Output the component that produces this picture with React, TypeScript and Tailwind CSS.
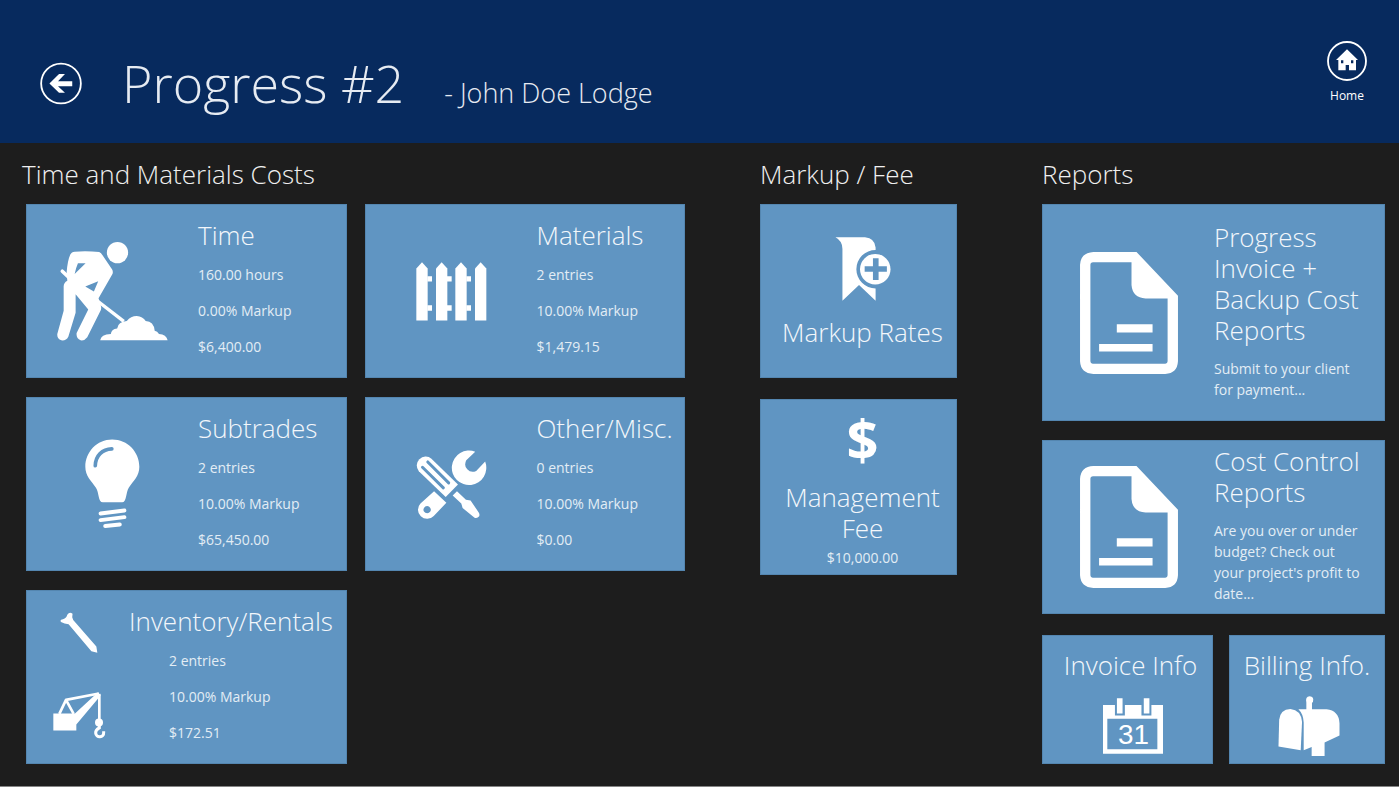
import type { ReactNode } from "react";

const TILE = "#6095c2";

function BackIcon() {
  return (
    <svg viewBox="0 0 126 130" className="h-[43px] w-[42px]" aria-hidden="true">
      <circle cx="63" cy="65" r="60" fill="none" stroke="#fff" strokeWidth="5.5" />
      <path d="M28 65 L57 36 H75 L54 58 H97 V73 H54 L75 93 H57Z" fill="#fff" />
    </svg>
  );
}

function HomeIcon() {
  return (
    <svg viewBox="0 0 120 120" className="h-10 w-10" aria-hidden="true">
      <circle cx="60" cy="60" r="57" fill="none" stroke="#fff" strokeWidth="5.5" />
      <path
        fillRule="evenodd"
        fill="#fff"
        d="M60 25 L93 57 H87 V88 H66 V72 H56 V88 H34 V57 H27Z M42 58 V67 H49 V58Z M72 58 V67 H79 V58Z"
      />
    </svg>
  );
}

function WorkerIcon() {
  return (
    <svg viewBox="111 275 334 298" className="h-[99px] w-[111px]" fill="#fff" aria-hidden="true">
      <circle cx="293" cy="307" r="32" />
      <path
        fillRule="evenodd"
        d="M164 304 Q200 301 238 305 Q244 308 248 315 L277 358 Q281 366 277 373 L236 444 L240 458 Q246 470 243 480 L202 562 Q194 573 182 571 Q168 565 170 549 L205 478 L167 432 V488 L145 560 Q138 573 124 571 Q110 566 112 551 L131 482 V412 Q130 398 142 392 L140 366 Q143 330 151 313 Q155 304 164 304Z M174 339 Q168 353 164 371 L197 339Z M196 409 L222 424 L235 393Z"
      />
      <path d="M127 363 L150 385" stroke="#fff" strokeWidth="11" strokeLinecap="round" />
      <path d="M231 451 L312 514" stroke="#fff" strokeWidth="10" />
      <path d="M241 571 Q243 553 273 552 Q274 537 292 535 Q295 515 321 513 Q333 498 351 498 Q369 499 378 513 Q402 514 405 542 Q413 543 418 552 Q440 553 444 571Z" />
    </svg>
  );
}

function FenceIcon() {
  const pickets = [169, 228, 286, 345];
  return (
    <svg viewBox="168 186 213 176" className="h-[59px] w-[71px]" fill="#fff" aria-hidden="true">
      {pickets.map((x, i) => (
        <g key={x}>
          <path d={`M${x} 361 V205 L${x + 17} 186 L${x + 34} 205 V361Z`} />
          {i < 3 && <path d={`M${x + 33} 228 h14 v16 h-14Z M${x + 33} 315 h14 v17 h-14Z`} />}
        </g>
      ))}
    </svg>
  );
}

function BulbIcon() {
  return (
    <svg viewBox="196 147 166 270" className="h-[90px] w-[55px]" fill="none" strokeLinecap="round" aria-hidden="true">
      <path
        fill="#fff"
        d="M278 148 C325 148 360 186 360 230 C360 258 342 273 328 293 C319 307 322 337 308 337 H250 C235 337 239 307 229 293 C215 273 197 258 197 230 C197 186 232 148 278 148Z"
      />
      <path d="M227 227 C228 196 248 177 277 176" stroke={TILE} strokeWidth="11" />
      <path d="M243 371 L315 362 M243 391 L315 382 M257 409 L301 404" stroke="#fff" strokeWidth="12" />
    </svg>
  );
}

function ToolsIcon() {
  return (
    <svg viewBox="168 177 213 208" className="h-[69px] w-[71px]" fill="#fff" aria-hidden="true">
      <path d="M214 203 L294 281 L257 319 L176 241 A27 27 0 0 1 214 203Z" />
      <path d="M203 213 L266 276 M187 229 L250 291" stroke={TILE} strokeWidth="9" strokeLinecap="round" />
      <path d="M291 301 L278 314 L304 338 L308 352 L344 381 Q352 384 358 377 Q360 371 357 366 L332 329 L318 327Z" />
      <path
        fillRule="evenodd"
        d="M222 301 L259 336 L221 376 A27 27 0 0 1 181 338Z M201 346 a11 11 0 1 0 0.1 0Z"
      />
      <path d="M346 182 L319 208 Q311 224 322 235 Q333 247 349 240 L376 212 A52 52 0 1 1 346 182Z" />
    </svg>
  );
}

function NailIcon() {
  return (
    <svg viewBox="119 80 115 124" className="h-[41px] w-[38px]" fill="#fff" aria-hidden="true">
      <path d="M122 110 Q117 104 128 102 Q139 98 141 88 Q148 78 157 85 L156 96 L159 104 L229 184 L232 203 L214 199 L145 117 L133 115Z" />
    </svg>
  );
}

function CraneIcon() {
  return (
    <svg viewBox="98 320 159 143" className="h-[48px] w-[53px]" fill="none" stroke="#fff" aria-hidden="true">
      <path d="M99 387 H164 L232 324 L241 333 L168 420 V438 H99Z" fill="#fff" stroke="none" />
      <path d="M117 388 L137 346 L236 327 M137 346 L160 388" strokeWidth="8" strokeLinejoin="round" />
      <path d="M237 328 V405" strokeWidth="8" />
      <circle cx="236" cy="414" r="12" fill="#fff" stroke="none" />
      <path d="M237 420 V430 Q225 436 226 446 A12 12 0 0 0 250 444 V440" strokeWidth="9" />
    </svg>
  );
}

function BookmarkIcon() {
  return (
    <svg viewBox="256 260 168 193" className="h-[64px] w-[56px]" fill="#fff" aria-hidden="true">
      <path d="M257 261 H346 Q376 264 378 292 V299 A58 58 0 0 0 378 415 V452 L328 405 L278 452 V296 Q278 272 257 261Z" />
      <circle cx="377" cy="357" r="46" />
      <path d="M345 348 H370 V324 H387 V348 H412 V365 H387 V390 H370 V365 H345Z" fill={TILE} />
    </svg>
  );
}

function DocumentIcon() {
  return (
    <svg viewBox="149 155 293 365" className="h-[122px] w-[98px]" fill="#fff" aria-hidden="true">
      <path
        fillRule="evenodd"
        d="M189 155 H318 L442 286 V482 Q440 518 404 520 H189 Q151 518 149 482 V193 Q151 157 189 155Z M188 186 Q180 186 180 194 V482 Q180 489 187 489 H404 Q411 489 411 482 V294 H345 Q306 292 303 254 V186Z"
      />
      <path d="M259 371 h107 v25 h-107Z M206 430 h160 v23 h-160Z" />
    </svg>
  );
}

function CalendarIcon() {
  return (
    <svg viewBox="218 219 181 168" className="h-[56px] w-[60px]" fill="#fff" aria-hidden="true">
      <path
        fillRule="evenodd"
        d="M218 240 H254 V271 H284 V240 H334 V271 H364 V240 H399 V387 H218Z M231 281 V373 H382 V281Z"
      />
      <path d="M260 219 h17 v46 h-17Z M341 219 h17 v46 h-17Z" />
      <text x="310" y="356" textAnchor="middle" fontSize="84" className="font-['Liberation_Sans',sans-serif]">
        31
      </text>
    </svg>
  );
}

function MailboxIcon() {
  return (
    <svg viewBox="744 212 186 181" className="h-[60px] w-[62px]" fill="#fff" aria-hidden="true">
      <path d="M747 284 Q750 252 781 251 Q813 254 816 290 L812 376 L745 364Z" />
      <path d="M805 252 H829 V232 Q825 214 839 213 Q853 214 849 229 L846 233 V252 H890 Q927 256 929 294 V331 L884 352 V393 H845 V366 L821 376 V292 Q820 266 805 252Z" />
    </svg>
  );
}

const tileClass =
  "cursor-pointer border border-[#5486b0] bg-[#6095c2] text-left text-[#e3edf5] hover:bg-[#6b9fcb]";
const titleClass = "block text-[26px] leading-[31px] font-light text-[#f3f7fb]";
const bodyClass = "block text-[14px] leading-5";

function CostTile({ title, lines, icon }: { title: string; lines: string[]; icon: ReactNode }) {
  return (
    <button type="button" className={`${tileClass} flex min-h-[174px] items-stretch`}>
      <span className="flex w-[171px] shrink-0 items-center justify-center">{icon}</span>
      <span className="block pt-[15px] whitespace-nowrap">
        <span className={titleClass}>{title}</span>
        <span className="mt-3.5 flex flex-col gap-4">
          {lines.map((line) => (
            <span key={line} className={bodyClass}>{line}</span>
          ))}
        </span>
      </span>
    </button>
  );
}

function InventoryTile() {
  return (
    <button type="button" className={`${tileClass} flex min-h-[174px] items-stretch`}>
      <span className="flex w-[102px] shrink-0 flex-col items-center justify-between pt-[21px] pb-6 pl-0.5">
        <NailIcon />
        <CraneIcon />
      </span>
      <span className="block pt-[15px] whitespace-nowrap">
        <span className={titleClass}>Inventory/Rentals</span>
        <span className="mt-3.5 flex flex-col gap-4 pl-10">
          <span className={bodyClass}>2 entries</span>
          <span className={bodyClass}>10.00% Markup</span>
          <span className={bodyClass}>$172.51</span>
        </span>
      </span>
    </button>
  );
}

function ReportTile({ title, text, size }: { title: string; text: string; size: string }) {
  return (
    <button type="button" className={`${tileClass} ${size} flex w-full items-stretch`}>
      <span className="flex w-[171px] shrink-0 items-center justify-center">
        <DocumentIcon />
      </span>
      <span className="block self-start whitespace-pre-line">
        <span className={titleClass}>{title}</span>
        <span className="mt-3 block text-[14px] leading-[21px]">{text}</span>
      </span>
    </button>
  );
}

function Heading({ children }: { children: ReactNode }) {
  return (
    <h2 className="mb-3 text-[26px] leading-[35px] font-light whitespace-nowrap text-[#f0f0f0]">{children}</h2>
  );
}

export default function App() {
  return (
    <div className="flex min-h-screen flex-col border-b border-[#858585] bg-[#1d1d1d] font-['Open_Sans','Noto_Sans',sans-serif] text-white">
      <header className="flex min-h-[143px] items-start justify-between bg-[#072a5e] pr-8 pl-10">
        <div className="flex items-center pt-[47px]">
          <button type="button" aria-label="Back" className="mr-10 cursor-pointer">
            <BackIcon />
          </button>
          <h1 className="text-[52px] leading-[72px] font-light whitespace-nowrap text-[#e6ebf2]">Progress #2</h1>
          <p className="ml-10 pt-[19px] text-[27px] leading-9 font-light whitespace-nowrap text-[#e6ebf2]">
            - John Doe Lodge
          </p>
        </div>
        <a href="#home" className="flex flex-col items-center gap-[5px] pt-[41px] text-[12px] leading-5">
          <HomeIcon />
          Home
        </a>
      </header>

      <main className="grid grid-cols-[659fr_197fr_353fr] items-start gap-x-[75px] pt-3.5 pr-3.5 pb-5 pl-[26px]">
        <section className="min-w-0">
          <div className="-ml-1">
            <Heading>Time and Materials Costs</Heading>
          </div>
          <div className="grid grid-cols-2 gap-x-[18px] gap-y-[19px]">
            <CostTile title="Time" lines={["160.00 hours", "0.00% Markup", "$6,400.00"]} icon={<WorkerIcon />} />
            <CostTile title="Materials" lines={["2 entries", "10.00% Markup", "$1,479.15"]} icon={<FenceIcon />} />
            <CostTile title="Subtrades" lines={["2 entries", "10.00% Markup", "$65,450.00"]} icon={<BulbIcon />} />
            <CostTile title="Other/Misc." lines={["0 entries", "10.00% Markup", "$0.00"]} icon={<ToolsIcon />} />
            <InventoryTile />
          </div>
        </section>

        <section className="min-w-0">
          <Heading>Markup / Fee</Heading>
          <div className="flex flex-col gap-[21px]">
            <button type="button" className={`${tileClass} flex min-h-[174px] flex-col items-center pt-8`}>
              <span className="block pl-2">
                <BookmarkIcon />
              </span>
              <span className={`${titleClass} mt-4 pl-2 whitespace-nowrap`}>Markup Rates</span>
            </button>
            <button type="button" className={`${tileClass} flex min-h-[176px] flex-col items-center pt-2 pl-2`}>
              <span className="block text-[56px] leading-[60px] font-bold text-white">$</span>
              <span className={`${titleClass} mt-3.5 text-center whitespace-pre-line`}>{"Management\nFee"}</span>
              <span className={`${bodyClass} mt-1`}>$10,000.00</span>
            </button>
          </div>
        </section>

        <section className="min-w-0 pl-2.5">
          <Heading>Reports</Heading>
          <ReportTile
            title={"Progress\nInvoice +\nBackup Cost\nReports"}
            text={"Submit to your client\nfor payment..."}
            size="min-h-[217px] pt-[17px] pb-[17px]"
          />
          <div className="mt-[19px]">
            <ReportTile
              title={"Cost Control\nReports"}
              text={"Are you over or under\nbudget? Check out\nyour project's profit to\ndate..."}
              size="min-h-[174px] py-[5px]"
            />
          </div>
          <div className="mt-[21px] grid grid-cols-[171fr_156fr] gap-4">
            <button type="button" className={`${tileClass} flex min-h-[129px] flex-col items-center pt-3.5`}>
              <span className={`${titleClass} pl-1.5 whitespace-nowrap`}>Invoice Info</span>
              <span className="mt-[17px] block pl-2.5">
                <CalendarIcon />
              </span>
            </button>
            <button type="button" className={`${tileClass} flex min-h-[129px] flex-col items-center pt-3.5`}>
              <span className={`${titleClass} whitespace-nowrap`}>Billing Info.</span>
              <span className="mt-[15px] block pl-1">
                <MailboxIcon />
              </span>
            </button>
          </div>
        </section>
      </main>
    </div>
  );
}
